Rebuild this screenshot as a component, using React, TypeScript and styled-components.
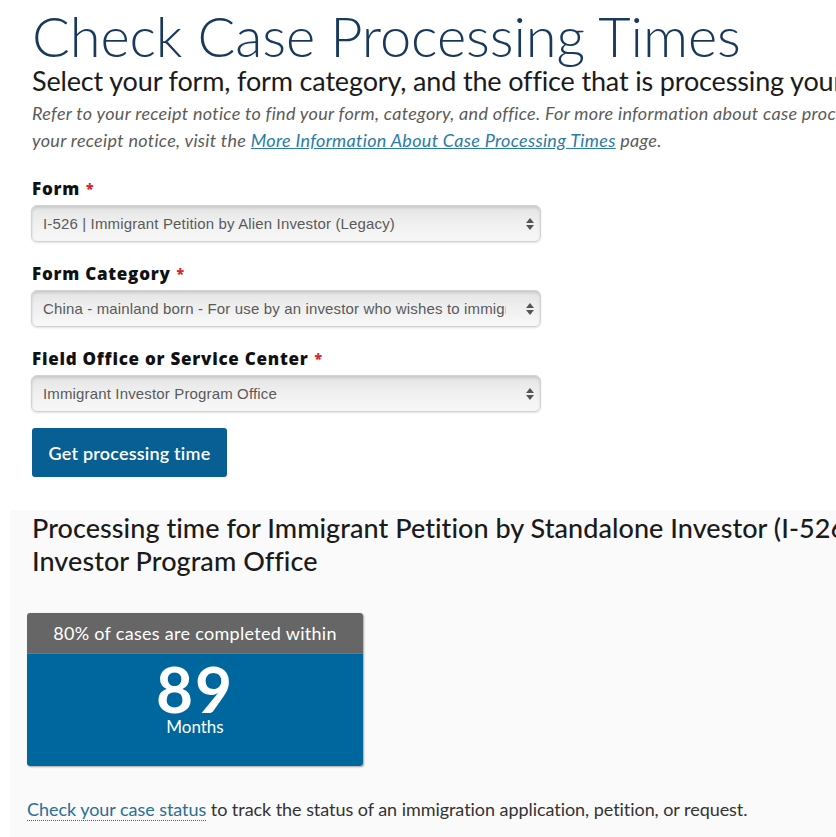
import React from 'react';
import styled, { createGlobalStyle } from 'styled-components';

const GlobalStyle = createGlobalStyle`
  html, body {
    margin: 0;
    padding: 0;
    background: #ffffff;
    overflow: hidden;
  }
  body {
    font-family: Lato, "Open Sans", sans-serif;
    color: #1b1b1b;
  }
`;

const Page = styled.div`
  width: 836px;
  overflow: hidden;
`;

const FormSection = styled.section`
  padding: 5px 0 0 32px;
`;

const Title = styled.h1`
  margin: 0;
  font-weight: 300;
  font-size: 56px;
  line-height: 62px;
  letter-spacing: -0.1px;
  color: #18395c;
  white-space: nowrap;
`;

const Subtitle = styled.h2`
  margin: 0;
  font-weight: 400;
  font-size: 27px;
  line-height: 28px;
  letter-spacing: -0.15px;
  color: #1b1b1b;
  white-space: nowrap;
`;

const Intro = styled.p`
  margin: 5px 0 0;
  font-style: italic;
  font-size: 18px;
  line-height: 27px;
  letter-spacing: 0.3px;
  color: #5b5b5b;
  white-space: nowrap;
`;

const InlineLink = styled.a`
  color: #2a7ba8;
  text-decoration: underline;
`;

const Fields = styled.div`
  margin-top: 25px;
  display: flex;
  flex-direction: column;
  gap: 22px;
`;

const Field = styled.div`
  display: flex;
  flex-direction: column;
  gap: 6px;
`;

const Label = styled.label`
  font-family: "Open Sans", Lato, sans-serif;
  font-weight: 800;
  font-size: 17px;
  line-height: 20px;
  letter-spacing: 0.75px;
  color: #111;
`;

const Required = styled.span`
  color: #d8262f;
  margin-left: 6px;
  font-size: 14px;
  vertical-align: top;
`;

const SelectWrap = styled.div`
  position: relative;
  width: 510px;
  margin-left: -1px;
`;

const Select = styled.select`
  appearance: none;
  -webkit-appearance: none;
  width: 100%;
  height: 37px;
  padding: 0 34px 0 11px;
  border: 1px solid #d3d3d3;
  border-radius: 6px;
  background: linear-gradient(to bottom, #e4e4e4 0%, #efefef 45%, #f8f8f8 100%);
  box-shadow: inset 0 2px 3px rgba(0, 0, 0, 0.12), 0 1px 2px rgba(0, 0, 0, 0.12);
  font-family: "Liberation Sans", Arial, sans-serif;
  font-size: 15px;
  letter-spacing: 0.15px;
  color: #5a5a5a;
  outline: none;
`;

const Arrows = styled.svg`
  position: absolute;
  right: 6px;
  top: 12px;
  pointer-events: none;
`;

const Button = styled.button`
  margin-top: 16px;
  width: 195px;
  height: 49px;
  border: none;
  border-radius: 3px;
  background: #075f93;
  color: #ffffff;
  font-family: Lato, sans-serif;
  font-weight: 600;
  font-size: 18px;
  letter-spacing: 0.2px;
  cursor: pointer;
`;

const ResultSection = styled.section`
  margin: 33px 0 0 10px;
  padding: 0 0 40px 22px;
  background: #fafafa;
`;

const ResultHeading = styled.h2`
  margin: 0;
  padding-top: 1px;
  font-weight: 500;
  font-size: 27px;
  line-height: 33px;
  letter-spacing: 0.05px;
  color: #1b1b1b;
  white-space: nowrap;
`;

const TimeCard = styled.div`
  margin: 36px 0 0 -5px;
  width: 336px;
  border-radius: 3px;
  overflow: hidden;
  box-shadow: 1px 1px 2px rgba(0, 0, 0, 0.35);
`;

const CardHeader = styled.div`
  height: 40px;
  background: #666666;
  color: #ffffff;
  font-size: 18px;
  letter-spacing: 0.3px;
  display: flex;
  align-items: center;
  justify-content: center;
  border-bottom: 1px solid #4f7fa0;
`;

const CardBody = styled.div`
  height: 112px;
  background: #00679e;
  color: #ffffff;
  display: flex;
  flex-direction: column;
  align-items: center;
  padding-top: 9px;
  box-sizing: border-box;
`;

const BigNumber = styled.div`
  font-weight: 700;
  font-size: 64px;
  line-height: 52px;
  letter-spacing: 2px;
`;

const Unit = styled.div`
  font-size: 17px;
  line-height: 20px;
  margin-top: 2px;
`;

const StatusLine = styled.p`
  margin: 32px 0 0 -5px;
  font-size: 18px;
  line-height: 22px;
  letter-spacing: -0.05px;
  color: #333333;
  white-space: nowrap;
`;

const DottedLink = styled.a`
  color: #2b6f96;
  text-decoration: none;
  border-bottom: 1px dotted #2b6f96;
`;

const SelectArrows = () => (
  <Arrows width="10" height="14" viewBox="0 0 10 14">
    <path d="M5 1 L9 6 H1 Z" fill="#555" />
    <path d="M5 13 L1 8 H9 Z" fill="#555" />
  </Arrows>
);

interface SelectFieldProps {
  label: string;
  value: string;
}

const SelectField: React.FC<SelectFieldProps> = ({ label, value }) => (
  <Field>
    <Label>
      {label}
      <Required>*</Required>
    </Label>
    <SelectWrap>
      <Select value={value} onChange={() => {}}>
        <option value={value}>{value}</option>
      </Select>
      <SelectArrows />
    </SelectWrap>
  </Field>
);

const App: React.FC = () => {
  return (
    <Page>
      <GlobalStyle />
      <FormSection>
        <Title>Check Case Processing Times</Title>
        <Subtitle>Select your form, form category, and the office that is processing your case</Subtitle>
        <Intro>
          Refer to your receipt notice to find your form, category, and office. For more information about case processing and how to read
          <br />
          your receipt notice, visit the <InlineLink href="#">More Information About Case Processing Times</InlineLink> page.
        </Intro>
        <Fields>
          <SelectField label="Form" value="I-526 | Immigrant Petition by Alien Investor (Legacy)" />
          <SelectField
            label="Form Category"
            value="China - mainland born - For use by an investor who wishes to immigrate to the United States"
          />
          <SelectField label="Field Office or Service Center" value="Immigrant Investor Program Office" />
        </Fields>
        <Button>Get processing time</Button>
      </FormSection>
      <ResultSection>
        <ResultHeading>
          Processing time for Immigrant Petition by Standalone Investor (I-526) at Immigrant
          <br />
          Investor Program Office
        </ResultHeading>
        <TimeCard>
          <CardHeader>80% of cases are completed within</CardHeader>
          <CardBody>
            <BigNumber>89</BigNumber>
            <Unit>Months</Unit>
          </CardBody>
        </TimeCard>
        <StatusLine>
          <DottedLink href="#">Check your case status</DottedLink> to track the status of an immigration application, petition, or request.
        </StatusLine>
      </ResultSection>
    </Page>
  );
};

export default App;
